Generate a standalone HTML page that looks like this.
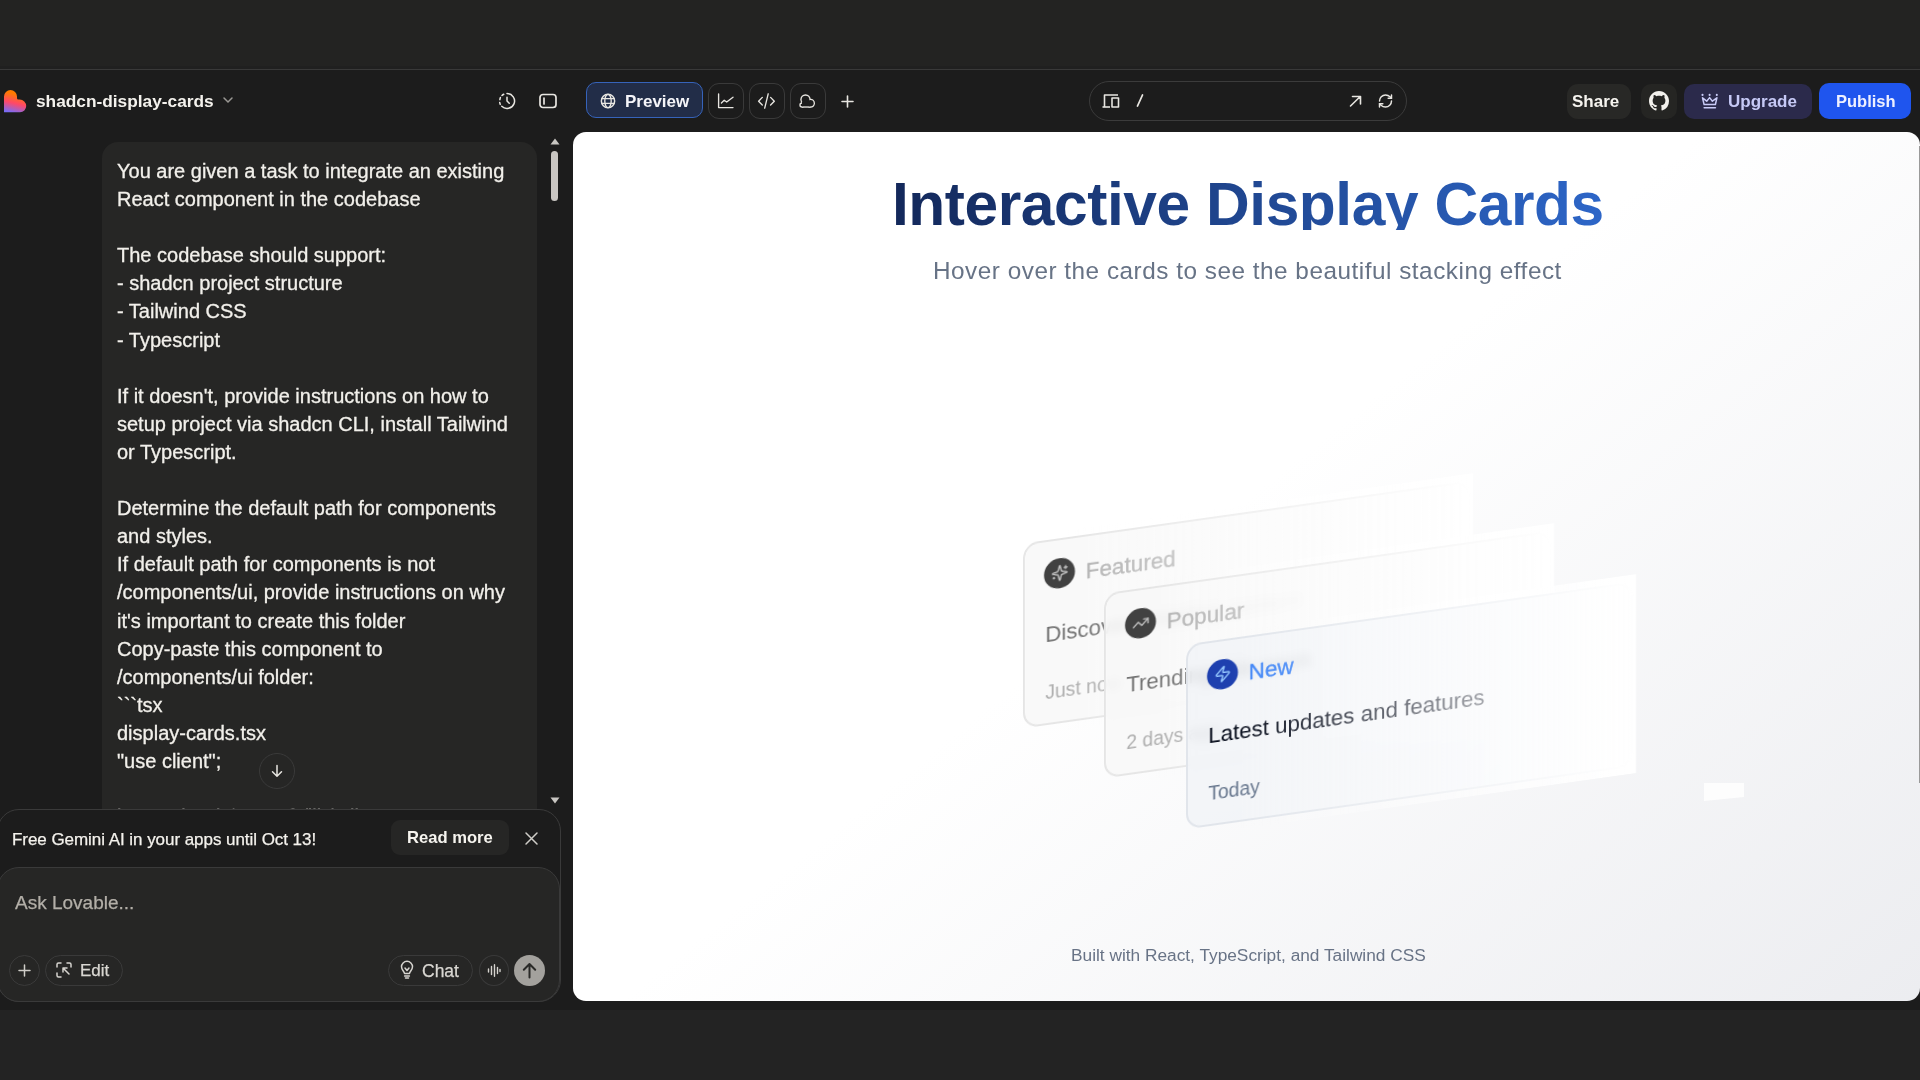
<!DOCTYPE html>
<html><head><meta charset="utf-8">
<style>
*{box-sizing:border-box;margin:0;padding:0}
html,body{width:1920px;height:1080px;overflow:hidden;background:#1c1c1c;font-family:"Liberation Sans",sans-serif;color:#f2f0eb}
.a{position:absolute}
.t{position:absolute;white-space:pre;line-height:20px}
.b{font-weight:700}
svg{position:absolute;overflow:visible}
.ic{fill:none;stroke:#e8e6e1;stroke-width:2;stroke-linecap:round;stroke-linejoin:round}
</style></head><body>
<!-- top strip -->
<div class="a" style="left:0;top:0;width:1920px;height:69px;background:#232322"></div>
<div class="a" style="left:0;top:66px;width:1920px;height:3px;background:#202020"></div>
<div class="a" style="left:0;top:69px;width:1920px;height:1px;background:#393939"></div>
<!-- bottom strip -->
<div class="a" style="left:0;top:1010px;width:1920px;height:70px;background:#232323"></div>

<!-- HEADER LEFT -->
<svg style="left:3.6px;top:89.6px" width="23" height="23" viewBox="0 0 23 23">
  <defs><linearGradient id="lg" x1="0.55" y1="0" x2="0.3" y2="1"><stop offset="0.18" stop-color="#ff7a00"/><stop offset="0.58" stop-color="#ff4868"/><stop offset="1" stop-color="#7a6cf6"/></linearGradient></defs>
  <path d="M0 22.3 L0 6.5 A6.5 6.5 0 0 1 13 6.5 L13 8.2 Q13 9.6 14.4 9.6 L15.7 9.6 A6.5 6.5 0 0 1 22.2 16.1 A6.2 6.2 0 0 1 16 22.3 Z" fill="url(#lg)"/>
</svg>
<div class="t b" style="left:36px;top:91px;font-size:17.3px;color:#f4f2ed">shadcn-display-cards</div>
<svg style="left:222px;top:96px" width="12" height="8" viewBox="0 0 12 8"><path d="M2 2 L6 6 L10 2" fill="none" stroke="#9a9894" stroke-width="1.5" stroke-linecap="round"/></svg>
<!-- history icon -->
<svg style="left:498px;top:92px" width="18" height="18" viewBox="0 0 24 24" class="ic"><path d="M12 2 A10 10 0 1 1 5 19.1" /><path d="M2.5 10.2 A10 10 0 0 1 3.2 7.3" /><path d="M2.3 14 A10 10 0 0 0 3 16.5"/><path d="M5.3 4.6 A10 10 0 0 1 7.7 3"/><path d="M12 7 L12 12 L15 15"/></svg>
<!-- sidebar icon -->
<svg style="left:539px;top:93px" width="18" height="16" viewBox="0 0 18 16" class="ic" style="stroke-width:1.7"><rect x="1" y="1.5" width="16" height="13" rx="3" stroke-width="1.7"/><path d="M5 5 L5 11" stroke-width="1.7"/></svg>

<!-- tabs -->
<div class="a" style="left:586px;top:82px;width:117px;height:36px;border-radius:10px;background:#222d48;border:1.5px solid #3663ba"></div>
<svg style="left:600px;top:93px" width="16" height="16" viewBox="0 0 24 24" class="ic" ><circle cx="12" cy="12" r="10" stroke-width="2.2"/><path d="M12 2a4.8 10 0 0 1 0 20a4.8 10 0 0 1 0-20M2.8 8.5h18.4M2.8 15.5h18.4" stroke-width="2.1"/></svg>
<div class="t b" style="left:625px;top:92px;font-size:17px;color:#f4f4f8">Preview</div>
<div class="a" style="left:708px;top:83px;width:36px;height:36px;border-radius:11px;border:1.5px solid #3a3a3a"></div>
<div class="a" style="left:749px;top:83px;width:36px;height:36px;border-radius:11px;border:1.5px solid #3a3a3a"></div>
<div class="a" style="left:790px;top:83px;width:36px;height:36px;border-radius:11px;border:1.5px solid #3a3a3a"></div>
<svg style="left:708px;top:83px" width="36" height="36" viewBox="0 0 36 36" class="ic"><path d="M10.6 11 V24.6 H25" stroke-width="1.35"/><path d="M13.4 20 L16.2 17.3 L18.7 19 L25 14.2" stroke-width="1.35"/></svg>
<svg style="left:749px;top:83px" width="36" height="36" viewBox="0 0 36 36" class="ic"><path d="M13.3 14.4 L9.6 18.2 L13.3 22 M21.6 14.4 L25.3 18.2 L21.6 22 M19.2 10.8 L15.7 25.2" stroke-width="1.35"/></svg>
<svg style="left:790px;top:83px" width="36" height="36" viewBox="0 0 36 36"><g fill="#e8e6e1"><circle cx="15.5" cy="16.5" r="5.2"/><circle cx="20.5" cy="20.2" r="4.5"/><circle cx="12" cy="22" r="2.7"/><rect x="12" y="19" width="8.5" height="5.7"/></g><g fill="#1c1c1c"><circle cx="15.5" cy="16.5" r="3.85"/><circle cx="20.5" cy="20.2" r="3.15"/><circle cx="12" cy="22" r="1.35"/><rect x="12" y="19" width="8.5" height="4.35"/></g></svg>
<svg style="left:841px;top:95px" width="13" height="13" viewBox="0 0 13 13" class="ic"><path d="M6.5 1 V12 M1 6.5 H12" stroke-width="1.6"/></svg>

<!-- url bar -->
<div class="a" style="left:1089px;top:81px;width:318px;height:40px;border-radius:20px;border:1.5px solid #3b3b3b"></div>
<svg style="left:1102px;top:94px" width="18" height="14" viewBox="0 0 18 14" class="ic"><path d="M2.5 13 V1 H16" stroke-width="1.6" stroke-linecap="butt"/><path d="M0.5 13 H8" stroke-width="1.6" stroke-linecap="butt"/><rect x="10" y="4" width="6.5" height="9" stroke-width="1.6"/></svg>
<svg style="left:1136px;top:94px" width="8" height="13" viewBox="0 0 8 13" class="ic"><path d="M6.5 1 L1.5 12" stroke-width="1.8"/></svg>
<svg style="left:1349px;top:95px" width="13" height="12" viewBox="0 0 13 12" class="ic"><path d="M1.5 11 L11 1.8 M3.5 1.5 H11.5 V9" stroke-width="1.6"/></svg>
<svg style="left:1377px;top:93px" width="17" height="16" viewBox="0 0 24 24" class="ic"><path d="M3 12a9 9 0 0 1 9-9 9.75 9.75 0 0 1 6.74 2.74L21 8" stroke-width="2.2"/><path d="M21 3v5h-5" stroke-width="2.2"/><path d="M21 12a9 9 0 0 1-9 9 9.75 9.75 0 0 1-6.74-2.74L3 16" stroke-width="2.2"/><path d="M8 16H3v5" stroke-width="2.2"/></svg>

<!-- right buttons -->
<div class="a" style="left:1567px;top:84px;width:64px;height:35px;border-radius:11px;background:#282826"></div>
<div class="t b" style="left:1572px;top:92px;font-size:17px;color:#f6f4ef">Share</div>
<div class="a" style="left:1641px;top:84px;width:36px;height:35px;border-radius:10px;background:#252523"></div>
<svg style="left:1648.5px;top:91px" width="20" height="20" viewBox="0 0 16 16"><path fill="#f2f0ec" d="M8 0C3.58 0 0 3.58 0 8c0 3.54 2.29 6.53 5.47 7.59.4.07.55-.17.55-.38 0-.19-.01-.82-.01-1.49-2.01.37-2.53-.49-2.69-.94-.09-.23-.48-.94-.82-1.13-.28-.15-.68-.52-.01-.53.63-.01 1.08.58 1.23.82.72 1.21 1.87.87 2.33.66.07-.52.28-.87.51-1.07-1.78-.2-3.64-.89-3.64-3.95 0-.87.31-1.59.82-2.15-.08-.2-.36-1.02.08-2.12 0 0 .67-.21 2.2.82.64-.18 1.32-.27 2-.27.68 0 1.36.09 2 .27 1.53-1.04 2.2-.82 2.2-.82.44 1.1.16 1.92.08 2.12.51.56.82 1.27.82 2.15 0 3.07-1.87 3.75-3.65 3.95.29.25.54.73.54 1.48 0 1.07-.01 1.93-.01 2.2 0 .21.15.46.55.38A8.013 8.013 0 0016 8c0-4.42-3.58-8-8-8z"/></svg>
<div class="a" style="left:1684px;top:84px;width:128px;height:35px;border-radius:10px;background:#2b2a4b"></div>
<svg style="left:1701px;top:93px" width="17" height="16" viewBox="0 0 17 16" class="ic"><path d="M1.5 4.8 L3.1 11.5 H14.4 L15.9 4.8 L11.4 8.2 L8.6 4.6 L5.7 8.2 Z" stroke="#c9cbf7" stroke-width="1.5"/><path d="M3.2 14.7 H14.4" stroke="#c9cbf7" stroke-width="1.6"/><circle cx="1.5" cy="1.9" r="1.05" fill="#c9cbf7" stroke="none"/><circle cx="8.6" cy="1.9" r="1.05" fill="#c9cbf7" stroke="none"/><circle cx="15.8" cy="1.9" r="1.05" fill="#c9cbf7" stroke="none"/></svg>
<div class="t b" style="left:1728px;top:91.5px;font-size:17px;color:#c6c9f6">Upgrade</div>
<div class="a" style="left:1819px;top:83px;width:92px;height:36px;border-radius:10px;background:#1f55ee"></div>
<div class="t b" style="left:1836px;top:90.5px;font-size:16.5px;color:#eef0ff">Publish</div>

<!-- CHAT -->
<div class="a" style="left:102px;top:142px;width:435px;height:700px;border-radius:16px;background:#262625"></div>
<div class="a" style="left:117px;top:157px;font-size:20px;line-height:28.1px;white-space:pre;color:#f2f0eb;letter-spacing:0px;-webkit-text-stroke:0.3px #f2f0eb">You are given a task to integrate an existing
React component in the codebase

The codebase should support:
- shadcn project structure
- Tailwind CSS
- Typescript

If it doesn't, provide instructions on how to
setup project via shadcn CLI, install Tailwind
or Typescript.

Determine the default path for components
and styles.
If default path for components is not
/components/ui, provide instructions on why
it's important to create this folder
Copy-paste this component to
/components/ui folder:
```tsx
display-cards.tsx
"use client";

import { cn } from "@/lib/utils";</div>
<!-- scrollbar -->
<svg style="left:550px;top:138px" width="10" height="7" viewBox="0 0 10 7"><path d="M5 0.5 L9.5 6.5 H0.5 Z" fill="#c8c6c2"/></svg>
<div class="a" style="left:551px;top:151px;width:7px;height:50px;border-radius:4px;background:#c9c6c2"></div>
<svg style="left:550px;top:797px" width="10" height="7" viewBox="0 0 10 7"><path d="M5 6.5 L9.5 0.5 H0.5 Z" fill="#c8c6c2"/></svg>
<!-- scroll down btn -->
<div class="a" style="left:259px;top:753px;width:36px;height:36px;border-radius:50%;border:1px solid #3a3a3a;background:#262625"></div>
<svg style="left:270px;top:764px" width="14" height="14" viewBox="0 0 14 14" class="ic"><path d="M7 1.5 V12 M2.5 7.8 L7 12.3 L11.5 7.8" stroke-width="1.5"/></svg>
<!-- notification container -->
<div class="a" style="left:-3px;top:809px;width:564px;height:193px;border-radius:22px;background:#1c1c1c;border:1.5px solid #3a3a3a"></div>
<div class="t" style="left:12px;top:830px;font-size:17px;color:#f4f2ed;letter-spacing:-0.05px;-webkit-text-stroke:0.25px #f4f2ed">Free Gemini AI in your apps until Oct 13!</div>
<div class="a" style="left:391px;top:820px;width:118px;height:35px;border-radius:9px;background:#262625"></div>
<div class="t b" style="left:407px;top:828px;font-size:16.6px;color:#f6f4ef">Read more</div>
<svg style="left:525px;top:832px" width="13" height="13" viewBox="0 0 13 13" class="ic"><path d="M1 1 L12 12 M12 1 L1 12" stroke-width="1.5" stroke="#cfcdc8"/></svg>
<!-- input -->
<div class="a" style="left:-3px;top:867px;width:563px;height:135px;border-radius:22px;background:#262625;border:1.5px solid #3a3a3a"></div>
<div class="t" style="left:15px;top:891px;font-size:19px;line-height:24px;color:#b3afa8;-webkit-text-stroke:0.25px #b3afa8">Ask Lovable...</div>
<div class="a" style="left:9px;top:955px;width:31px;height:31px;border-radius:50%;border:1.5px solid #3a3a3a"></div>
<svg style="left:18px;top:964px" width="13" height="13" viewBox="0 0 13 13" class="ic"><path d="M6.5 1 V12 M1 6.5 H12" stroke-width="1.5" stroke="#cfcdc8"/></svg>
<div class="a" style="left:45px;top:955px;width:78px;height:31px;border-radius:16px;border:1.5px solid #3a3a3a"></div>
<svg style="left:56px;top:962px" width="16" height="16" viewBox="0 0 16 16" class="ic"><path d="M1 5 V2.5 A1.5 1.5 0 0 1 2.5 1 H5 M11 1 H13.5 A1.5 1.5 0 0 1 15 2.5 V5 M1 11 V13.5 A1.5 1.5 0 0 0 2.5 15 H5" stroke-width="1.5" stroke="#d6d4cf"/><path d="M7 6 L13 12 M7 6 V10 M7 6 H11" stroke-width="1.5" stroke="#d6d4cf"/></svg>
<div class="t" style="left:80px;top:961px;font-size:17px;color:#d9d7d2;-webkit-text-stroke:0.25px #d9d7d2">Edit</div>
<div class="a" style="left:388px;top:955px;width:85px;height:31px;border-radius:16px;border:1.5px solid #3a3a3a"></div>
<svg style="left:400px;top:961px" width="14" height="18" viewBox="0 0 14 18" class="ic"><path d="M4.5 12.5 C4.5 10.5 1.5 9 1.5 5.8 A5.5 5.5 0 0 1 12.5 5.8 C12.5 9 9.5 10.5 9.5 12.5 Z M4.6 15 H9.4 M5.5 17 H8.5 M5 7 L7 9.5 L9 7" stroke-width="1.5" stroke="#d6d4cf"/></svg>
<div class="t" style="left:422px;top:961px;font-size:17.5px;color:#d9d7d2;-webkit-text-stroke:0.25px #d9d7d2">Chat</div>
<div class="a" style="left:479px;top:955px;width:30px;height:31px;border-radius:50%;border:1.5px solid #3a3a3a"></div>
<svg style="left:487px;top:964px" width="14" height="13" viewBox="0 0 14 13" class="ic"><path d="M1.5 5 V8 M4.5 2.5 V10.5 M7.5 0.8 V12.2 M10.5 3.5 V9.5 M13 5.5 V7.5" stroke-width="1.4" stroke="#d6d4cf"/></svg>
<div class="a" style="left:514px;top:955px;width:31px;height:31px;border-radius:50%;background:#a3a19d"></div>
<svg style="left:521px;top:962px" width="17" height="17" viewBox="0 0 17 17" class="ic"><path d="M8.5 15.5 V2 M2.8 7.7 L8.5 2 L14.2 7.7" stroke-width="2" stroke="#2a2a28"/></svg>


<!-- PREVIEW -->
<div class="a" style="left:573px;top:132px;width:1347px;height:869px;border-radius:13px;overflow:hidden;background:linear-gradient(to bottom right,#ffffff 0%,#ffffff 42%,#e8e9ed 100%) 0 0/1347px 1080px no-repeat">
  <div class="a" style="left:0;top:0;width:1346px;text-align:center">
    <span id="ttl" style="position:absolute;left:319px;top:47px;height:51px;line-height:51px;font-size:60.5px;letter-spacing:-0.45px;font-weight:700;white-space:pre;background:linear-gradient(to right,#13285a,#2d66c8);-webkit-background-clip:text;background-clip:text;color:transparent">Interactive Display Cards</span>
  </div>
  <div class="t" style="left:360px;top:124px;font-size:24.3px;line-height:30px;letter-spacing:0.52px;color:#677386">Hover over the cards to see the beautiful stacking effect</div>
  <div class="t" style="left:498px;top:813px;font-size:17.3px;line-height:20px;color:#687386">Built with React, TypeScript, and Tailwind CSS</div>
  <div class="a" style="left:1346px;top:14px;width:1px;height:637px;background:#9a9a9a"></div>
  <svg style="left:1131px;top:651px" width="40" height="18" viewBox="0 0 40 18"><path d="M0 0 H40 V14 L0 18 Z" fill="#fdfdfd"/></svg>
  <div class="a" style="left:450.00px;top:379.60px;width:447px;height:184.5px;transform:skewY(-8deg);border:2.54px solid #e1e5eb;border-radius:15.24px;background:rgba(240,242,246,0.7);backdrop-filter:blur(5px);filter:grayscale(1);">
  <div class="t" style="left:60.7px;top:16.86px;line-height:35.6px;font-size:22.5px;color:#3b82f6;-webkit-text-stroke:0.35px #3b82f6">Featured</div>
  <div class="t" style="left:20.2px;top:75.43px;line-height:35.6px;font-size:22.3px;color:#020817">Discover amazing content</div>
  <div class="t" style="left:20.2px;top:135.49px;line-height:30.5px;font-size:19.4px;color:#64748b">Just now</div>
  <div class="a" style="left:0;top:0;width:100%;height:100%;border-radius:12.7px;background:rgba(255,255,255,0.42);outline:1.27px solid #e2e8f0"></div>
  <div class="a" style="left:19.1px;top:17.51px;width:30.5px;height:30.5px;border-radius:50%;background:#1e40af"><svg style="left:6.5px;top:6.5px" width="17.5" height="17.5" viewBox="0 0 24 24" fill="none" stroke="#93c5fd" stroke-width="2" stroke-linecap="round" stroke-linejoin="round"><path d="M9.937 15.5A2 2 0 0 0 8.5 14.063l-6.135-1.582a.5.5 0 0 1 0-.962L8.5 9.936A2 2 0 0 0 9.937 8.5l1.582-6.135a.5.5 0 0 1 .963 0L14.063 8.5A2 2 0 0 0 15.5 9.937l6.135 1.581a.5.5 0 0 1 0 .964L15.5 14.063a2 2 0 0 0-1.437 1.437l-1.582 6.135a.5.5 0 0 1-.963 0z"/><path d="M20 3v4M22 5h-4M4 17v2M5 18H3"/></svg></div>
  <div class="a" style="right:-5.08px;top:-5%;width:406.4px;height:110%;background:linear-gradient(to left,#ffffff,rgba(255,255,255,0))"></div>
</div><div class="a" style="left:531.30px;top:430.40px;width:447px;height:184.5px;transform:skewY(-8deg);border:2.54px solid #e1e5eb;border-radius:15.24px;background:rgba(240,242,246,0.7);backdrop-filter:blur(5px);filter:grayscale(1);">
  <div class="t" style="left:60.7px;top:16.86px;line-height:35.6px;font-size:22.5px;color:#3b82f6;-webkit-text-stroke:0.35px #3b82f6">Popular</div>
  <div class="t" style="left:20.2px;top:75.43px;line-height:35.6px;font-size:22.3px;color:#020817">Trending this week</div>
  <div class="t" style="left:20.2px;top:135.49px;line-height:30.5px;font-size:19.4px;color:#64748b">2 days ago</div>
  <div class="a" style="left:0;top:0;width:100%;height:100%;border-radius:12.7px;background:rgba(255,255,255,0.42);outline:1.27px solid #e2e8f0"></div>
  <div class="a" style="left:19.1px;top:17.51px;width:30.5px;height:30.5px;border-radius:50%;background:#1e40af"><svg style="left:6.5px;top:6.5px" width="17.5" height="17.5" viewBox="0 0 24 24" fill="none" stroke="#93c5fd" stroke-width="2" stroke-linecap="round" stroke-linejoin="round"><polyline points="22 7 13.5 15.5 8.5 10.5 2 17"/><polyline points="16 7 22 7 22 13"/></svg></div>
  <div class="a" style="right:-5.08px;top:-5%;width:406.4px;height:110%;background:linear-gradient(to left,#ffffff,rgba(255,255,255,0))"></div>
</div><div class="a" style="left:612.60px;top:481.20px;width:447px;height:184.5px;transform:skewY(-8deg);border:2.54px solid #e1e5eb;border-radius:15.24px;background:rgba(240,242,246,0.7);backdrop-filter:blur(5px);">
  <div class="t" style="left:60.7px;top:16.86px;line-height:35.6px;font-size:22.5px;color:#3b82f6;-webkit-text-stroke:0.35px #3b82f6">New</div>
  <div class="t" style="left:20.2px;top:75.43px;line-height:35.6px;font-size:22.3px;color:#020817">Latest updates and features</div>
  <div class="t" style="left:20.2px;top:135.49px;line-height:30.5px;font-size:19.4px;color:#64748b">Today</div>
  
  <div class="a" style="left:19.1px;top:17.51px;width:30.5px;height:30.5px;border-radius:50%;background:#1e40af"><svg style="left:6.5px;top:6.5px" width="17.5" height="17.5" viewBox="0 0 24 24" fill="none" stroke="#93c5fd" stroke-width="2" stroke-linecap="round" stroke-linejoin="round"><path d="M4 14a1 1 0 0 1-.78-1.63l9.9-10.2a.5.5 0 0 1 .86.46l-1.92 6.02A1 1 0 0 0 13 10h7a1 1 0 0 1 .78 1.63l-9.9 10.2a.5.5 0 0 1-.86-.46l1.92-6.02A1 1 0 0 0 11 14z"/></svg></div>
  <div class="a" style="right:-5.08px;top:-5%;width:406.4px;height:110%;background:linear-gradient(to left,#ffffff,rgba(255,255,255,0))"></div>
</div>
</div>


</body></html>
